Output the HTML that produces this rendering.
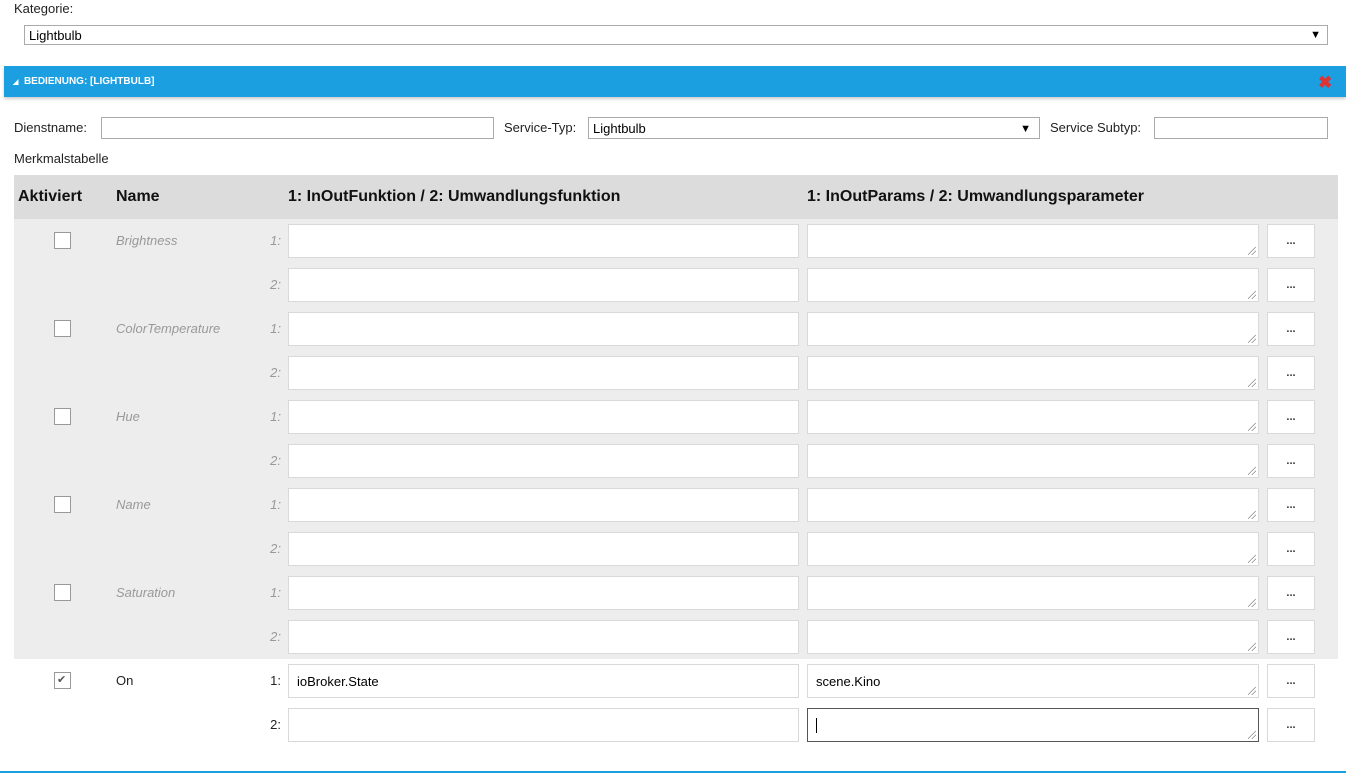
<!DOCTYPE html>
<html><head><meta charset="utf-8"><style>
*{box-sizing:border-box;margin:0;padding:0}
body{width:1346px;height:774px;overflow:hidden;background:#fff;font-family:"Liberation Sans",sans-serif;font-size:13px;color:#222;position:relative}
.a{position:absolute}
.inp{position:absolute;background:#fff;border:1px solid #d9d9d9}
.btn{position:absolute;background:#fff;border:1px solid #d9d9d9;width:48px;height:34px;text-align:center;font-size:11px;line-height:32px;font-weight:bold;color:#333}
.cb{position:absolute;width:17px;height:17px;border:1px solid #999;background:#fff}
.nm{position:absolute;left:116px;font-style:italic;color:#999;font-size:13px}
.lb{position:absolute;width:30px;left:251px;text-align:right;font-style:italic;color:#999;font-size:13px}
.rs{position:absolute;right:2px;bottom:2px;width:8px;height:8px;background:linear-gradient(135deg,transparent 45%,#888 46%,#888 52%,transparent 53%,transparent 70%,#888 71%,#888 77%,transparent 78%)}
.h{position:absolute;top:188px;font-weight:bold;font-size:16px;color:#111}
</style></head><body>
<div class="a" style="left:14px;top:1px;font-size:13px">Kategorie:</div>
<div class="inp" style="left:24px;top:25px;width:1304px;height:20px;border-color:#aaa;padding:2px 4px;font-size:13px;color:#000">Lightbulb<span class="a" style="right:6px;top:3px;font-size:11px">▼</span></div>
<div class="a" style="left:4px;top:66px;width:1342px;height:31px;background:#1c9fe0;box-shadow:0 2px 3px rgba(0,0,0,.2)"></div>
<div class="a" style="left:13px;top:76px;color:#fff;font-weight:bold;font-size:10px"><span style="font-size:7px">◢</span>&nbsp; BEDIENUNG: [LIGHTBULB]</div>
<div class="a" style="left:1318px;top:73px;color:#d33;font-weight:bold;font-size:17px">✖</div>
<div class="a" style="left:14px;top:120px">Dienstname:</div>
<div class="inp" style="left:101px;top:117px;width:393px;height:22px;border-color:#aaa"></div>
<div class="a" style="left:504px;top:120px">Service-Typ:</div>
<div class="inp" style="left:588px;top:117px;width:452px;height:22px;border-color:#aaa;padding:3px 4px;color:#000">Lightbulb<span class="a" style="right:8px;top:5px;font-size:11px">▼</span></div>
<div class="a" style="left:1050px;top:120px">Service Subtyp:</div>
<div class="inp" style="left:1154px;top:117px;width:174px;height:22px;border-color:#aaa"></div>
<div class="a" style="left:14px;top:151px">Merkmalstabelle</div>
<div class="a" style="left:14px;top:175px;width:1324px;height:44px;background:#dcdcdc"></div>
<div class="a" style="left:14px;top:219px;width:1324px;height:440px;background:#ededed"></div>
<div class="h" style="left:18px">Aktiviert</div>
<div class="h" style="left:116px">Name</div>
<div class="h" style="left:288px">1: InOutFunktion / 2: Umwandlungsfunktion</div>
<div class="h" style="left:807px">1: InOutParams / 2: Umwandlungsparameter</div>
<div id="rows"></div>
<script>
var names=["Brightness","ColorTemperature","Hue","Name","Saturation","On"];var h="";
names.forEach(function(n,i){var y=224+i*88;var on=i==5;
var st=on?'font-style:normal;color:#222':'';
h+='<div class="cb" style="left:54px;top:'+(y+8)+'px">'+(on?'<span style="position:absolute;left:2px;top:0px;font-size:11px;color:#555">✔</span>':'')+'</div>';
h+='<div class="nm" style="top:'+(y+9)+'px;'+st+'">'+n+'</div>';
for(var k=0;k<2;k++){var yy=y+k*44;
h+='<div class="lb" style="top:'+(yy+9)+'px;'+st+'">'+(k+1)+':</div>';
h+='<div class="inp" style="left:288px;top:'+yy+'px;width:511px;height:34px;padding:9px 8px;color:#000">'+(on&&k==0?'ioBroker.State':'')+'</div>';
var ta=on&&k==1?'border-color:#555;':'';
h+='<div class="inp" style="left:807px;top:'+yy+'px;width:452px;height:34px;padding:9px 8px;color:#000;'+ta+'">'+(on&&k==0?'scene.Kino':'')+(on&&k==1?'<span style="display:inline-block;width:1px;height:15px;background:#000"></span>':'')+'<div class="rs"></div></div>';
h+='<div class="btn" style="left:1267px;top:'+yy+'px">...</div>';}
});
document.getElementById("rows").innerHTML=h;
</script>
<div class="a" style="left:0;top:771px;width:1346px;height:2px;background:#1c9fe0"></div>
</body></html>
